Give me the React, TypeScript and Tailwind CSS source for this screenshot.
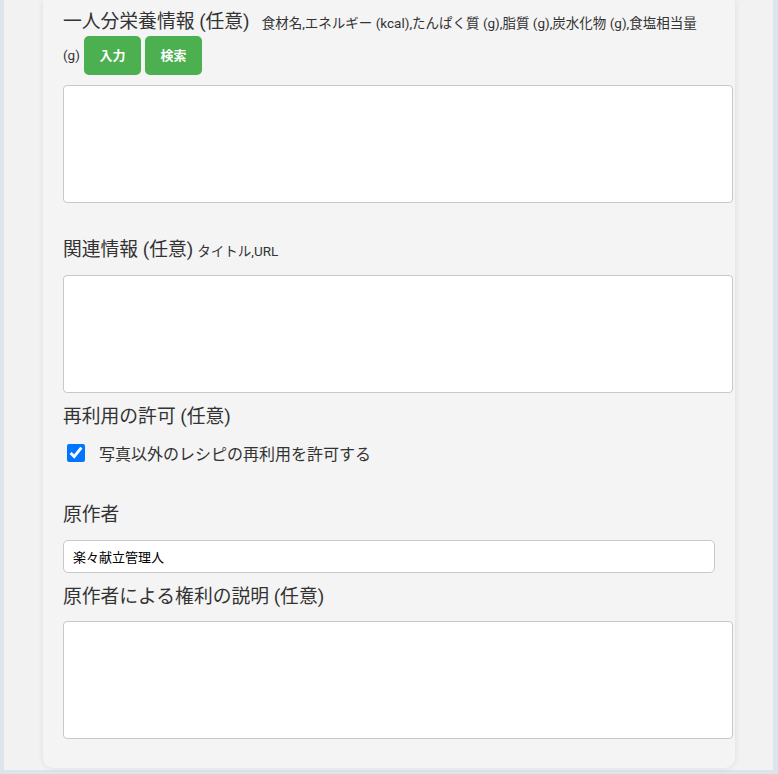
import React from "react";

const font = { fontFamily: "Roboto, 'Noto Sans CJK JP', sans-serif" };

function Heading({ children }: { children: React.ReactNode }) {
  return <span className="text-[18.8px] leading-[28px] text-[#333]">{children}</span>;
}

function Area() {
  return (
    <textarea className="block w-[670px] h-[118px] bg-white border border-[#c8c8c8] rounded-[4px] outline-none resize-none" />
  );
}

export default function App() {
  return (
    <div style={font} className="h-[774px] bg-[#dce5ec] pl-[4px] pr-[5px] pb-[4px] overflow-hidden">
      <div className="h-[770px] bg-[#f2f2f2]">
        <div className="ml-[39px] w-[692px] h-[768px] bg-[#f4f4f4] rounded-b-[10px] shadow-[0_0_6px_rgba(0,0,0,0.09)] px-[20px] pt-[8px]">
          {/* nutrition */}
          <div className="flex items-baseline h-[28px]">
            <Heading>一人分栄養情報 (任意)</Heading>
            <span className="ml-[12px] text-[13.5px] text-[#333] whitespace-nowrap">
              食材名,エネルギー (kcal),たんぱく質 (g),脂質 (g),炭水化物 (g),食塩相当量
            </span>
          </div>
          <div className="flex items-center gap-[4px] h-[39px]">
            <span className="text-[13.5px] text-[#333]">(g)</span>
            <button className="w-[57px] h-[39px] bg-[#4caf50] text-white text-[13px] font-bold rounded-[5px]">
              入力
            </button>
            <button className="w-[57px] h-[39px] bg-[#4caf50] text-white text-[13px] font-bold rounded-[5px]">
              検索
            </button>
          </div>
          <div className="mt-[10px]">
            <Area />
          </div>

          {/* related */}
          <div className="mt-[33px] flex items-baseline h-[28px]">
            <Heading>関連情報 (任意)</Heading>
            <span className="ml-[4px] text-[13.5px] text-[#333]">タイトル,URL</span>
          </div>
          <div className="mt-[11px]">
            <Area />
          </div>

          {/* reuse */}
          <div className="mt-[10px] h-[28px]">
            <Heading>再利用の許可 (任意)</Heading>
          </div>
          <label className="mt-[13px] flex items-center h-[18px]">
            <input type="checkbox" defaultChecked className="ml-[4px] w-[18px] h-[18px] m-0" />
            <span className="ml-[14px] mt-[4px] text-[16px] text-[#333]">写真以外のレシピの再利用を許可する</span>
          </label>

          {/* author */}
          <div className="mt-[39px] h-[28px]">
            <Heading>原作者</Heading>
          </div>
          <input
            defaultValue="楽々献立管理人"
            className="mt-[11px] block w-[652px] h-[33px] bg-white border border-[#c8c8c8] rounded-[5px] px-[9px] text-[13px] text-black outline-none"
          />
          <div className="mt-[10px] h-[28px]">
            <Heading>原作者による権利の説明 (任意)</Heading>
          </div>
          <div className="mt-[10px]">
            <Area />
          </div>
        </div>
      </div>
    </div>
  );
}
